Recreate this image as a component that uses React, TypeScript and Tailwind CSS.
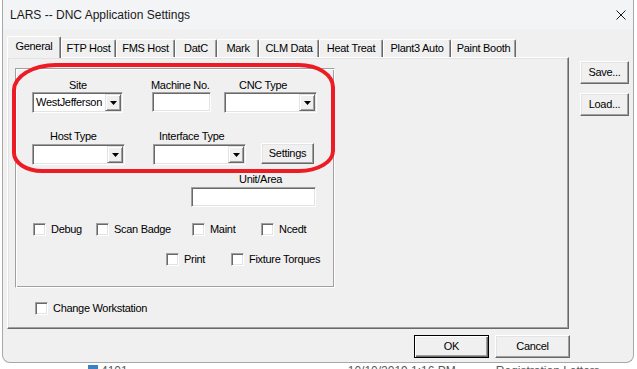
const sunken =
  "border border-t-[#a0a0a0] border-l-[#a0a0a0] border-b-white border-r-white shadow-[inset_1px_1px_0_#696969,inset_-1px_-1px_0_#e3e3e3]";
const raised =
  "border border-t-white border-l-white border-b-[#696969] border-r-[#696969] shadow-[inset_-1px_-1px_0_#a0a0a0,inset_1px_1px_0_#e3e3e3]";

const tabs: [string, string][] = [
  ["FTP Host", "w-[55px]"],
  ["FMS Host", "w-[59px]"],
  ["DatC", "w-[42px]"],
  ["Mark", "w-[42px]"],
  ["CLM Data", "w-[60px]"],
  ["Heat Treat", "w-[64px]"],
  ["Plant3 Auto", "w-[68px]"],
  ["Paint Booth", "w-[65px]"],
];

function DropBtn() {
  return (
    <div className="flex h-full w-[16px] shrink-0 items-center justify-center border border-t-[#e3e3e3] border-l-[#e3e3e3] border-b-[#696969] border-r-[#696969] bg-[#f0f0f0] shadow-[inset_1px_1px_0_white,inset_-1px_-1px_0_#a0a0a0]">
      <svg width="7" height="4" viewBox="0 0 7 4">
        <polygon points="0,0 7,0 3.5,4" fill="#000" />
      </svg>
    </div>
  );
}

function Combo({ className, value }: { className: string; value?: string }) {
  return (
    <div className={`flex h-[21px] items-stretch bg-white p-[1px] ${sunken} ${className}`}>
      <span className="flex flex-1 items-center overflow-hidden whitespace-nowrap pl-[2px] leading-[13px]">
        {value}
      </span>
      <DropBtn />
    </div>
  );
}

function TextBox({ className }: { className: string }) {
  return <div className={`h-[20px] bg-white ${sunken} ${className}`} />;
}

function Check({ label, className }: { label: string; className: string }) {
  return (
    <div className={`flex items-center ${className}`}>
      <div className={`h-[13px] w-[13px] bg-white ${sunken}`} />
      <span className="ml-[5px] leading-[13px]">{label}</span>
    </div>
  );
}

function Btn({
  className,
  children,
  def,
}: {
  className: string;
  children: React.ReactNode;
  def?: boolean;
}) {
  const edge = def
    ? "border border-black shadow-[inset_1px_1px_0_white,inset_-1px_-1px_0_#696969,inset_-2px_-2px_0_#a0a0a0]"
    : raised;
  return (
    <div className={`flex items-center justify-center bg-[#f0f0f0] leading-[13px] ${edge} ${className}`}>
      {children}
    </div>
  );
}

export default function App() {
  return (
    <div className="h-[369px] w-[637px] overflow-hidden bg-white font-['Liberation_Sans',Arial,sans-serif] text-[11px] tracking-[-0.3px] text-black">
      <div className="ml-[2px] flex h-[363px] w-[632px] flex-col rounded-b-[8px] border-x border-b border-[#a8a8a8] bg-[#f0f0f0]">
        {/* title bar */}
        <div className="flex h-[29px] items-center bg-[#f3f4f6] pl-[7px]">
          <span className="text-[12px] tracking-normal text-[#1a1a1a]">LARS -- DNC Application Settings</span>
          <svg className="ml-auto mr-[7px]" width="10" height="10" viewBox="0 0 10 10">
            <path d="M0.5 0.5 L9.5 9.5 M9.5 0.5 L0.5 9.5" stroke="#1a1a1a" strokeWidth="1" />
          </svg>
        </div>

        <div className="pl-[4px] pt-[7px]">
          <div className="flex">
            {/* tab control */}
            <div className="w-[562px]">
              <div className="flex h-[21px] items-start">
                <div className="relative z-10 flex h-[22px] w-[54px] items-center justify-center rounded-t-[2px] border-l border-r border-t border-l-white border-r-[#696969] border-t-white bg-[#f0f0f0] pb-[2px] shadow-[inset_-1px_0_0_#a0a0a0]">
                  General
                </div>
                {tabs.map(([t, w]) => (
                  <div
                    key={t}
                    className={`mt-[3px] flex h-[18px] items-center justify-center rounded-t-[2px] border-l border-r border-t border-l-white border-r-[#696969] border-t-white shadow-[inset_-1px_0_0_#a0a0a0] ${w}`}
                  >
                    {t}
                  </div>
                ))}
              </div>

              <div className={`h-[272px] pl-[7px] pt-[10px] ${raised}`}>
                {/* group frame */}
                <div className="relative h-[220px] w-[320px] border border-t-[#a0a0a0] border-l-[#a0a0a0] border-b-white border-r-white shadow-[inset_1px_1px_0_white,inset_-1px_-1px_0_#a0a0a0]">
                  <div className="mt-[10px] flex h-[13px] leading-[13px]">
                    <span className="ml-[53px] w-[82px]">Site</span>
                    <span className="w-[88px]">Machine No.</span>
                    <span>CNC Type</span>
                  </div>
                  <div className="flex items-start">
                    <Combo className="ml-[16px] w-[91px]" value="WestJefferson" />
                    <TextBox className="ml-[29px] w-[59px]" />
                    <Combo className="ml-[13px] w-[93px]" />
                  </div>

                  <div className="mt-[17px] flex h-[13px] leading-[13px]">
                    <span className="ml-[34px] w-[109px]">Host Type</span>
                    <span>Interface Type</span>
                  </div>
                  <div className="flex items-start">
                    <Combo className="ml-[16px] mt-[1px] w-[93px]" />
                    <Combo className="ml-[28px] mt-[1px] w-[93px]" />
                    <Btn className="ml-[15px] h-[21px] w-[53px]">Settings</Btn>
                  </div>

                  <div className="mt-[8px] h-[13px] pl-[223px] leading-[13px]">Unit/Area</div>
                  <TextBox className="ml-[175px] mt-[1px] w-[125px]" />

                  <div className="mt-[16px] flex h-[13px]">
                    <Check label="Debug" className="ml-[17px] w-[63px]" />
                    <Check label="Scan Badge" className="w-[96px]" />
                    <Check label="Maint" className="w-[69px]" />
                    <Check label="Ncedt" className="" />
                  </div>
                  <div className="mt-[17px] flex h-[13px]">
                    <Check label="Print" className="ml-[150px] w-[65px]" />
                    <Check label="Fixture Torques" className="" />
                  </div>

                  {/* red annotation */}
                  <div className="pointer-events-none absolute -left-[4px] -top-[6px] h-[110px] w-[323px] rounded-[44px_36px_36px_30px/27px_24px_22px_20px] border-[4px] border-[#ed1c24]" />
                </div>

                <Check label="Change Workstation" className="ml-[20px] mt-[14px] h-[13px]" />
              </div>
            </div>

            {/* side buttons */}
            <div className="ml-[11px] mt-[25px] flex flex-col">
              <Btn className="h-[23px] w-[49px]">Save...</Btn>
              <Btn className="mt-[9px] h-[23px] w-[49px]">Load...</Btn>
            </div>
          </div>

          <div className="mt-[6px] flex">
            <Btn def className="ml-[407px] h-[23px] w-[75px]">OK</Btn>
            <Btn className="ml-[6px] h-[23px] w-[75px]">Cancel</Btn>
          </div>
        </div>
      </div>

      {/* window behind, peeking out below */}
      <div className="flex h-[6px] items-start pt-[1px] text-[12px] leading-[14px] tracking-normal text-[#5a5a5a]">
        <div className="ml-[88px] mt-[1px] h-[6px] w-[10px] bg-[#3b82c4]" />
        <span className="ml-[3px]">4101</span>
        <span className="ml-[220px]">10/10/2019 1:16 PM</span>
        <span className="ml-[40px]">Registration Letters</span>
      </div>
    </div>
  );
}
